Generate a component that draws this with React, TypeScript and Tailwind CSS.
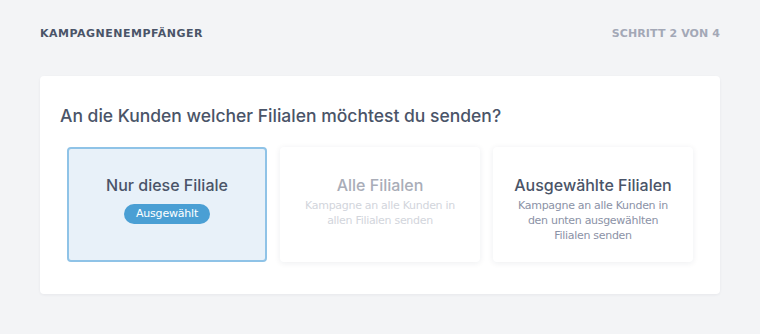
const font = { fontFamily: '"DejaVu Sans", "Noto Sans", sans-serif' };
const strong = { fontFamily: 'Inter, "DejaVu Sans", sans-serif' };

interface Option {
  title: string;
  text?: string;
  state: "selected" | "disabled" | "normal";
}

const options: Option[] = [
  { title: "Nur diese Filiale", state: "selected" },
  { title: "Alle Filialen", text: "Kampagne an alle Kunden in allen Filialen senden", state: "disabled" },
  { title: "Ausgewählte Filialen", text: "Kampagne an alle Kunden in den unten ausgewählten Filialen senden", state: "normal" },
];

const OptionCard = ({ option }: { option: Option }) => {
  const selected = option.state === "selected";
  const disabled = option.state === "disabled";
  return (
    <div
      className={`h-[115px] rounded-[4px] flex flex-col items-center px-5 text-center ${
        selected
          ? "bg-[#e8f1f9] border-2 border-[#8fc3e7] pt-[26px]"
          : "bg-white shadow-[0_1px_6px_rgba(30,40,70,0.08)] pt-[28px]"
      }`}
    >
      <div
        style={strong}
        className={`text-[16px] font-medium leading-5 ${
          disabled ? "text-[#a9adb8]" : "text-[#4a5468]"
        }`}
      >
        {option.title}
      </div>
      {selected && (
        <span className="mt-[9px] rounded-full bg-[#4a9fd4] text-white text-[11px] tracking-[-0.2px] px-[12px] h-[20px] leading-[20px]">
          Ausgewählt
        </span>
      )}
      {option.text && (
        <div
          className={`mt-[3px] text-[11px] tracking-[-0.3px] leading-[15px] ${
            disabled ? "text-[#d2d5dc]" : "text-[#8b92a6]"
          }`}
        >
          {option.text}
        </div>
      )}
    </div>
  );
};

export default function App() {
  return (
    <div className="min-h-screen w-full bg-[#f3f4f6] px-10 pt-[26px]" style={font}>
      <div className="flex justify-between items-center h-[16px]">
        <span className="text-[11px] font-bold tracking-[0.5px] text-[#4a5468]">KAMPAGNENEMPFÄNGER</span>
        <span className="text-[11px] font-bold tracking-[0.1px] text-[#a3a8b6]">SCHRITT 2 VON 4</span>
      </div>
      <div className="mt-[34px] bg-white rounded-[4px] shadow-[0_1px_3px_rgba(30,40,70,0.06)] px-5 pt-[28px] pb-[32px]">
        <h2 style={strong} className="text-[17.5px] leading-6 text-[#4a5468] font-medium">
          An die Kunden welcher Filialen möchtest du senden?
        </h2>
        <div className="mt-[19px] grid grid-cols-3 gap-[13px] px-[7px]">
          {options.map((o) => (
            <OptionCard key={o.title} option={o} />
          ))}
        </div>
      </div>
    </div>
  );
}
